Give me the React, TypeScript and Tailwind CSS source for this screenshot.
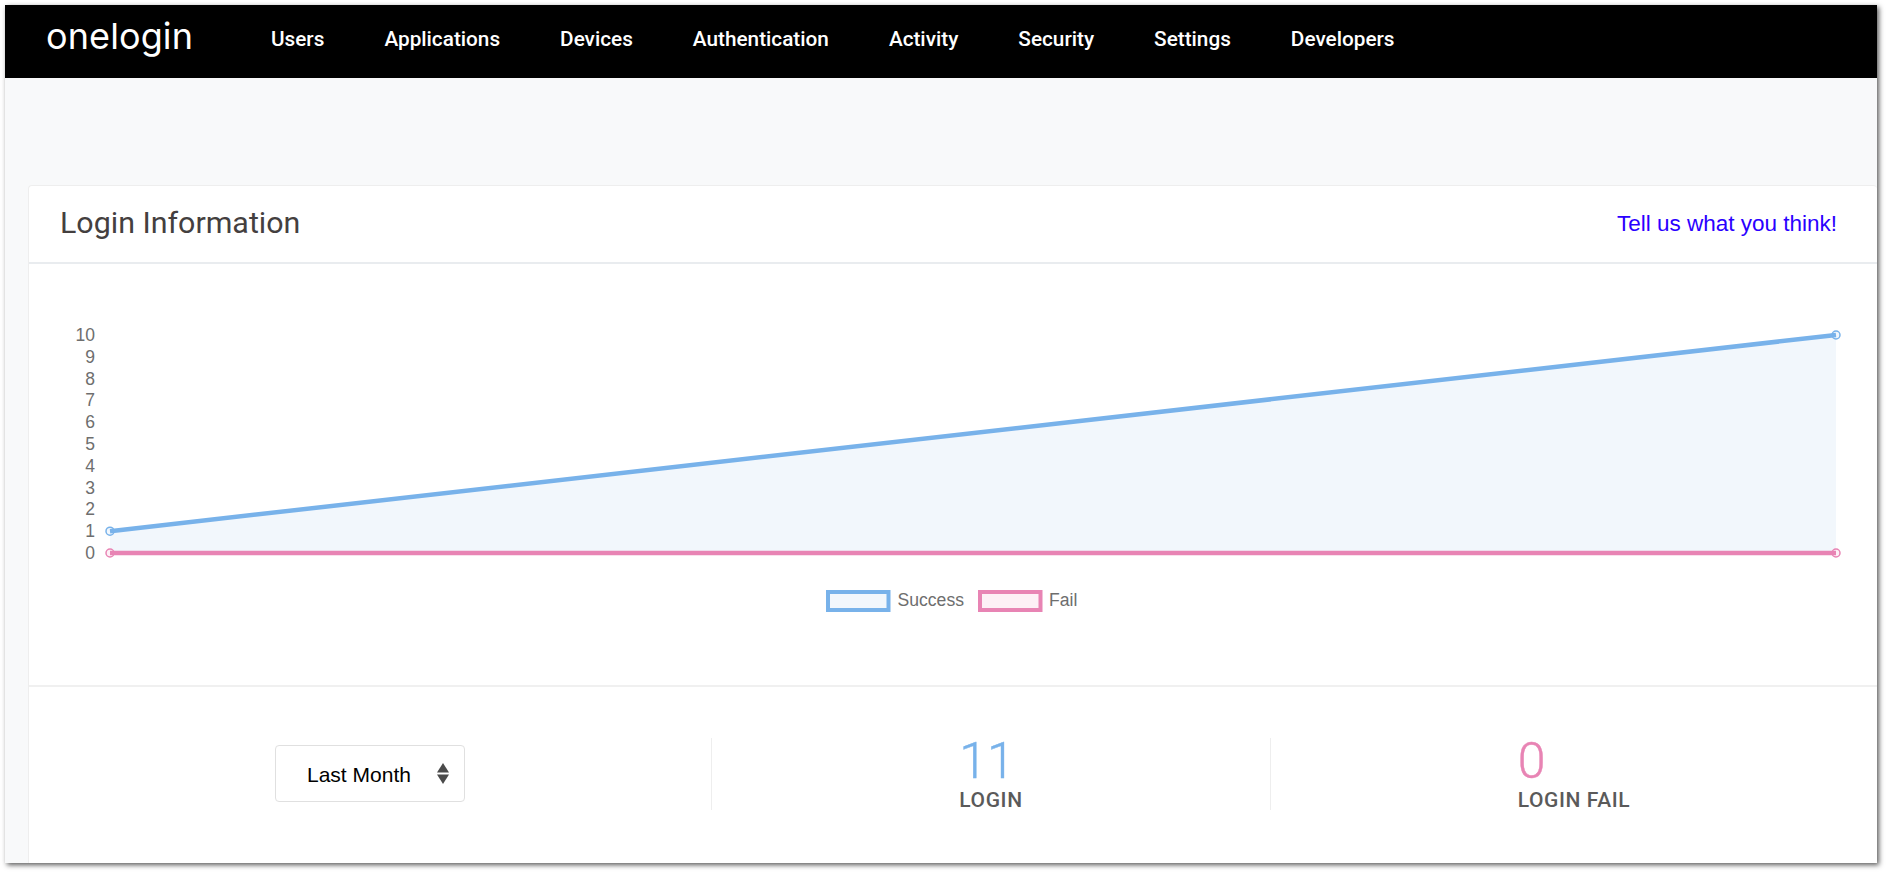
import React from 'react';

const navItems = ['Users', 'Applications', 'Devices', 'Authentication', 'Activity', 'Security', 'Settings', 'Developers'];

const yTicks = [10, 9, 8, 7, 6, 5, 4, 3, 2, 1, 0];

const BLUE = '#78b2ea';
const PINK = '#e884b4';

function LoginChart() {
  const yFor = (v: number) => 553 - v * 21.8;

  return (
    <svg viewBox="29 264 1848 421" className="block h-[421px] w-full">
      {yTicks.map(t => (
        <text key={t} x="95" y={yFor(t) + 6} textAnchor="end" fontSize="17.5" fill="#6e6e6e" fontFamily="Liberation Sans, sans-serif">
          {t}
        </text>
      ))}

      {/* success */}
      <polygon points={`110,${yFor(1)} 1836,${yFor(10)} 1836,553 110,553`} fill="#f2f7fc" />
      <circle cx="110" cy={yFor(1)} r="4" fill="#f2f7fc" stroke={BLUE} strokeWidth="1.5" />
      <circle cx="1836" cy={yFor(10)} r="4" fill="#f2f7fc" stroke={BLUE} strokeWidth="1.5" />
      <line x1="110" y1={yFor(1)} x2="1836" y2={yFor(10)} stroke={BLUE} strokeWidth="4.5" />

      {/* fail */}
      <circle cx="110" cy="553" r="4" fill="#fdf0f6" stroke={PINK} strokeWidth="1.5" />
      <circle cx="1836" cy="553" r="4" fill="#fdf0f6" stroke={PINK} strokeWidth="1.5" />
      <line x1="110" y1="553" x2="1836" y2="553" stroke={PINK} strokeWidth="4.5" />

      {/* legend */}
      <rect x="828" y="592" width="60.5" height="18" fill="#f2f7fc" stroke={BLUE} strokeWidth="4" />
      <text x="897.5" y="606" fontSize="17.6" fill="#6e6e6e" fontFamily="Liberation Sans, sans-serif">Success</text>
      <rect x="980" y="592" width="60.5" height="18" fill="#fdf0f6" stroke={PINK} strokeWidth="4" />
      <text x="1049" y="606" fontSize="17.6" fill="#6e6e6e" fontFamily="Liberation Sans, sans-serif">Fail</text>
    </svg>
  );
}

function Stat({ value, label, color }: { value: number; label: string; color: string }) {
  return (
    <div className="flex flex-col items-start pt-[2px]">
      <span className={`text-[50px] leading-[48px] font-light [-webkit-text-stroke:0.4px] ${color}`}>{value}</span>
      <span className="mt-[3px] text-[21px] leading-[24px] font-medium tracking-[0.6px] text-[#5a5a5a]">{label}</span>
    </div>
  );
}

export default function App() {
  return (
    <div className="min-h-[872px] bg-white pt-[5px] pl-[5px] font-['Roboto',sans-serif]">
      <div className="flex h-[858px] w-[1872px] flex-col bg-[#f8f9fa] shadow-[2px_2px_5px_rgba(0,0,0,0.65)]">
        <header className="flex h-[73px] shrink-0 items-center bg-black">
          <div className="ml-[41px] w-[225px] pb-[12px] font-['Inter',sans-serif] text-[36px] leading-none font-normal tracking-[0.1px] text-white">
            onelogin
          </div>
          <nav className="flex gap-[60px] pb-[4px]">
            {navItems.map(item => (
              <a key={item} className="text-[20.75px] font-medium text-white">
                {item}
              </a>
            ))}
          </nav>
        </header>

        <div className="mt-[107px] ml-[23px] flex min-h-0 flex-1 flex-col rounded-t-[4px] border border-r-0 border-b-0 border-[#eeeeee] bg-white">
          <div className="flex h-[78px] shrink-0 items-center justify-between border-b-2 border-[#e9ecef] pr-[40px] pl-[31px]">
            <h2 className="pb-[2px] text-[30.4px] font-normal text-[#443f3f]">Login Information</h2>
            <a className="font-['Liberation_Sans',sans-serif] text-[22.5px] text-[#2a00ff]">Tell us what you think!</a>
          </div>

          <LoginChart />

          <div className="grid flex-1 grid-cols-[682px_559px_1fr] items-center border-t-2 border-[#f0f0f0] pb-[3px]">
            <div className="flex h-[72px] items-center justify-center">
              <div className="flex h-[57px] w-[190px] items-center justify-between rounded-[4px] border border-[#e0e0e0] pr-[15px] pl-[31px] font-['Liberation_Sans',sans-serif] text-[21px] text-black">
                <span className="pt-[2px]">Last Month</span>
                <svg width="12" height="21" viewBox="0 0 12 21" fill="#4a4a4a">
                  <polygon points="6,0 12,9.5 0,9.5" />
                  <polygon points="0,11.5 12,11.5 6,21" />
                </svg>
              </div>
            </div>
            <div className="flex h-[72px] items-center justify-center border-l border-[#eeeeee]">
              <Stat value={11} label="LOGIN" color="text-[#78b2ea]" />
            </div>
            <div className="flex h-[72px] items-center justify-center border-l border-[#eeeeee]">
              <Stat value={0} label="LOGIN FAIL" color="text-[#e884b4]" />
            </div>
          </div>
        </div>
      </div>
    </div>
  );
}
